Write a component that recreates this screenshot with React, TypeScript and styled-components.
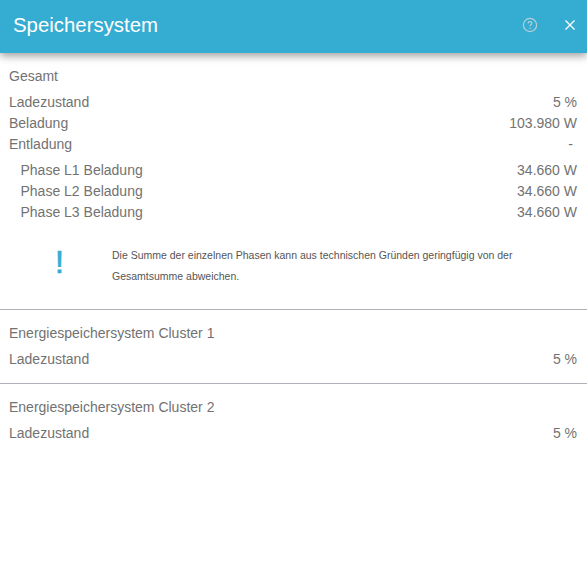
import React, { FC } from 'react';
import styled, { createGlobalStyle } from 'styled-components';

const GlobalStyle = createGlobalStyle`
	html, body {
		margin: 0;
		padding: 0;
		background: #fff;
		font-family: 'Liberation Sans', Arial, sans-serif;
	}
`;

const App: FC = () => {
	return (
		<Root>
			<GlobalStyle />
			<Header>
				<Title>Speichersystem</Title>
				<HeaderIcons>
					<HelpIcon viewBox='0 0 16 16' fill='none'>
						<circle cx='8' cy='8' r='6.6' stroke='#b9cfd8' strokeWidth='1.2' />
						<path
							d='M6.1 6.4c0-1.1.9-1.8 1.9-1.8s1.9.7 1.9 1.7c0 1.5-1.9 1.5-1.9 3'
							stroke='#b9cfd8'
							strokeWidth='1.2'
						/>
						<circle cx='8' cy='11.2' r='.75' fill='#b9cfd8' />
					</HelpIcon>
					<CloseIcon viewBox='0 0 12 12' fill='none'>
						<path d='M1.5 1.5l9 9M10.5 1.5l-9 9' stroke='#fff' strokeWidth='1.3' />
					</CloseIcon>
				</HeaderIcons>
			</Header>
			<Section>
				<SectionTitle>Gesamt</SectionTitle>
				<Rows>
					<Row>
						<span>Ladezustand</span>
						<span>5 %</span>
					</Row>
					<Row>
						<span>Beladung</span>
						<span>103.980 W</span>
					</Row>
					<Row>
						<span>Entladung</span>
						<EmptyValue>-</EmptyValue>
					</Row>
				</Rows>
				<PhaseRows>
					<Row>
						<span>Phase L1 Beladung</span>
						<span>34.660 W</span>
					</Row>
					<Row>
						<span>Phase L2 Beladung</span>
						<span>34.660 W</span>
					</Row>
					<Row>
						<span>Phase L3 Beladung</span>
						<span>34.660 W</span>
					</Row>
				</PhaseRows>
				<Notice>
					<NoticeMark>!</NoticeMark>
					<NoticeText>
						Die Summe der einzelnen Phasen kann aus technischen Gründen geringfügig von der
						Gesamtsumme abweichen.
					</NoticeText>
				</Notice>
			</Section>
			<Section>
				<SectionTitle>Energiespeichersystem Cluster 1</SectionTitle>
				<Rows>
					<Row>
						<span>Ladezustand</span>
						<span>5 %</span>
					</Row>
				</Rows>
			</Section>
			<Section>
				<SectionTitle>Energiespeichersystem Cluster 2</SectionTitle>
				<Rows>
					<Row>
						<span>Ladezustand</span>
						<span>5 %</span>
					</Row>
				</Rows>
			</Section>
		</Root>
	);
};

export default App;

const Root = styled.div`
	width: 587px;
	height: 587px;
	overflow: hidden;
	background: #fff;
	color: #727272;
	font-size: 14px;
`;

const Header = styled.div`
	height: 53px;
	background: #35acd1;
	box-shadow: 0 3px 8px rgba(0, 0, 0, 0.38);
	display: flex;
	align-items: center;
	justify-content: space-between;
	padding: 0 11px 3px 13px;
	box-sizing: border-box;
`;

const Title = styled.div`
	color: #fff;
	font-size: 20.4px;
`;

const HeaderIcons = styled.div`
	display: flex;
	align-items: center;
	gap: 26px;
`;

const HelpIcon = styled.svg`
	width: 16px;
	height: 16px;
`;

const CloseIcon = styled.svg`
	width: 12px;
	height: 12px;
`;

const Section = styled.div`
	padding: 15px 10px 13px 9px;
	border-bottom: 1px solid #b0b0b8;
	&:last-child {
		border-bottom: none;
	}
`;

const SectionTitle = styled.div`
	line-height: 16px;
	margin-bottom: 8px;
`;

const Rows = styled.div`
	display: flex;
	flex-direction: column;
`;

const PhaseRows = styled(Rows)`
	margin-top: 5px;
	padding-left: 11.5px;
`;

const Row = styled.div`
	display: flex;
	justify-content: space-between;
	height: 21px;
	line-height: 21px;
`;

const EmptyValue = styled.span`
	padding-right: 4px;
`;

const Notice = styled.div`
	display: flex;
	align-items: flex-start;
	margin-top: 22px;
	padding-bottom: 9px;
`;

const NoticeMark = styled.div`
	width: 103px;
	padding-left: 46px;
	box-sizing: border-box;
	color: #35acd1;
	font-size: 32px;
	-webkit-text-stroke: 0.7px #35acd1;
	line-height: 35px;
	flex-shrink: 0;
`;

const NoticeText = styled.div`
	width: 420px;
	font-size: 10.5px;
	line-height: 21px;
	color: #555;
`;
